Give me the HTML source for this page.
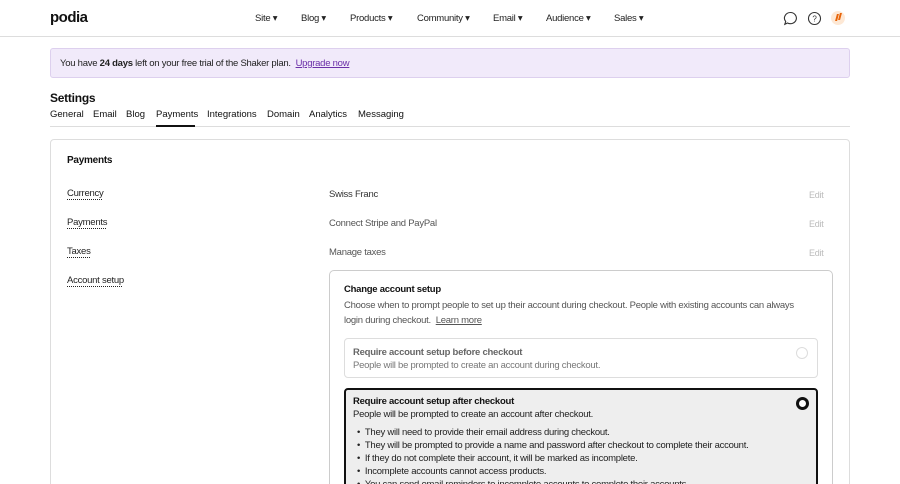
<!DOCTYPE html>
<html style="height:484px;overflow:hidden"><head><style>
*{margin:0;padding:0;box-sizing:border-box}
body{width:900px;height:484px;overflow:hidden;background:#fff;font-family:"Liberation Sans",sans-serif;color:#222;font-size:9.5px;letter-spacing:-0.25px;position:relative}
.a{position:absolute;white-space:nowrap}
.nav span{position:absolute;top:13px;font-size:9.5px;color:#222}
.tabs span{position:absolute;top:109px;font-size:9.5px;letter-spacing:0;color:#111}
.lbl{text-decoration:underline dotted;text-underline-offset:3px;font-size:9.5px}
.edit{color:#bbb;font-size:9px}
</style></head><body>
<div class="a" style="left:50px;top:9px;font-size:15px;font-weight:bold;letter-spacing:-0.5px;color:#111">podia</div>
<div class="nav">
<span style="left:255px">Site ▾</span><span style="left:301px">Blog ▾</span><span style="left:350px">Products ▾</span><span style="left:417px">Community ▾</span><span style="left:493px">Email ▾</span><span style="left:546px">Audience ▾</span><span style="left:614px">Sales ▾</span>
</div>
<svg class="a" style="left:783px;top:11px" width="15" height="15" viewBox="0 0 15 15"><path d="M7.5 1.5a6 5.6 0 1 1-3 10.5L1.8 13.3l.9-2.8A6 5.6 0 0 1 7.5 1.5z" fill="none" stroke="#333" stroke-width="1.1"/></svg>
<svg class="a" style="left:807px;top:11px" width="15" height="15" viewBox="0 0 15 15"><circle cx="7.5" cy="7.5" r="6" fill="none" stroke="#333" stroke-width="1.1"/><text x="7.5" y="10.5" font-size="8" text-anchor="middle" fill="#333" font-family="Liberation Sans">?</text></svg>
<div class="a" style="left:831px;top:11px;width:14px;height:14px;border-radius:50%;background:#fde8d5"></div>
<div class="a" style="left:836px;top:14px;width:2px;height:7px;background:#e8650a;transform:skew(-15deg)"></div>
<div class="a" style="left:839px;top:13px;width:2px;height:7px;background:#e8650a;transform:skew(-15deg)"></div>
<div class="a" style="left:0;top:36px;width:900px;height:1px;background:#ddd"></div>
<div class="a" style="left:50px;top:48px;width:800px;height:30px;background:#f1eafa;border:1px solid #ddd0ee;border-radius:3px"></div>
<div class="a" style="left:60px;top:58px">You have <b>24 days</b> left on your free trial of the Shaker plan. &nbsp;<span style="color:#6b2fa8;text-decoration:underline">Upgrade now</span></div>
<div class="a" style="left:50px;top:91px;font-size:12px;font-weight:bold;color:#111">Settings</div>
<div class="tabs">
<span style="left:50px">General</span><span style="left:93px">Email</span><span style="left:126px">Blog</span><span style="left:156px">Payments</span><span style="left:207px">Integrations</span><span style="left:267px">Domain</span><span style="left:309px">Analytics</span><span style="left:358px">Messaging</span>
</div>
<div class="a" style="left:50px;top:126px;width:800px;height:1px;background:#ddd"></div>
<div class="a" style="left:156px;top:125px;width:39px;height:2px;background:#111"></div>
<div class="a" style="left:50px;top:139px;width:800px;height:360px;border:1px solid #ddd;border-radius:4px"></div>
<div class="a" style="left:67px;top:155px;font-size:10px;font-weight:bold;color:#111">Payments</div>
<div class="a lbl" style="left:67px;top:188px">Currency</div>
<div class="a lbl" style="left:67px;top:217px">Payments</div>
<div class="a lbl" style="left:67px;top:246px">Taxes</div>
<div class="a lbl" style="left:67px;top:275px">Account setup</div>
<div class="a" style="left:329px;top:189px;color:#333">Swiss Franc</div>
<div class="a" style="left:329px;top:218px;color:#555">Connect Stripe and PayPal</div>
<div class="a" style="left:329px;top:247px;color:#555">Manage taxes</div>
<div class="a edit" style="left:809px;top:190px">Edit</div>
<div class="a edit" style="left:809px;top:219px">Edit</div>
<div class="a edit" style="left:809px;top:248px">Edit</div>
<div class="a" style="left:329px;top:270px;width:504px;height:230px;border:1px solid #ccc;border-radius:5px"></div>
<div class="a" style="left:344px;top:284px;font-weight:bold;color:#111">Change account setup</div>
<div class="a" style="left:344px;top:298px;color:#555;line-height:15px">Choose when to prompt people to set up their account during checkout. People with existing accounts can always<br>login during checkout. &nbsp;<span style="text-decoration:underline">Learn more</span></div>
<div class="a" style="left:344px;top:338px;width:474px;height:40px;border:1px solid #ddd;border-radius:4px"></div>
<div class="a" style="left:353px;top:347px;font-weight:bold;color:#666">Require account setup before checkout</div>
<div class="a" style="left:353px;top:360px;color:#777">People will be prompted to create an account during checkout.</div>
<div class="a" style="left:796px;top:347px;width:12px;height:12px;border-radius:50%;border:1px solid #ddd"></div>
<div class="a" style="left:344px;top:388px;width:474px;height:120px;border:2px solid #111;border-radius:4px;background:#eee"></div>
<div class="a" style="left:353px;top:396px;font-weight:bold;color:#111">Require account setup after checkout</div>
<div class="a" style="left:353px;top:409px;color:#222">People will be prompted to create an account after checkout.</div>
<div class="a" style="left:796px;top:397px;width:13px;height:13px;border-radius:50%;border:3px solid #111;background:#fff"></div>
<div class="a" style="left:357px;top:426px;color:#222;line-height:13px">
• &nbsp;They will need to provide their email address during checkout.<br>
• &nbsp;They will be prompted to provide a name and password after checkout to complete their account.<br>
• &nbsp;If they do not complete their account, it will be marked as incomplete.<br>
• &nbsp;Incomplete accounts cannot access products.<br>
• &nbsp;You can send email reminders to incomplete accounts to complete their accounts.</div>
</body></html>
